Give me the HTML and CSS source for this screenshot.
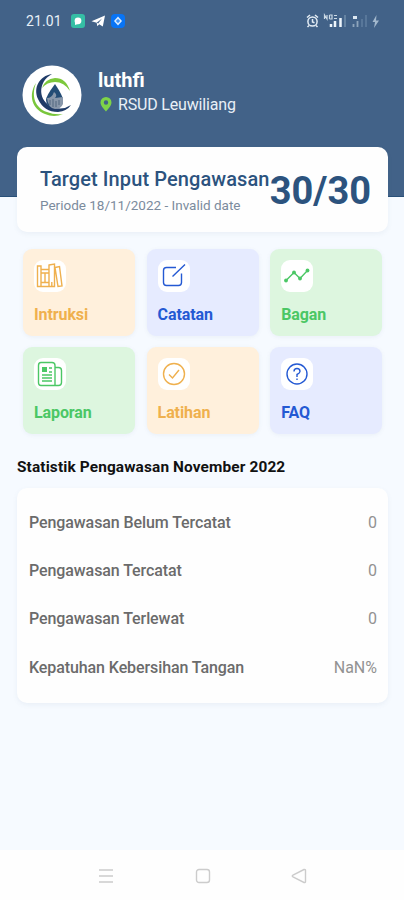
FILE: index.html
```html
<!DOCTYPE html>
<html lang="id">
<head>
<meta charset="utf-8">
<title>Pengawasan</title>
<link rel="stylesheet" href="styles.css">
</head>
<body>
<div class="app">
  <header class="header">
    <div class="status">
      <span class="time">21.01</span>
      <svg class="apps" width="54" height="14" viewBox="0 0 54 14">
        <rect width="14" height="14" rx="3" fill="#35bea5"/>
        <circle cx="7" cy="6.8" r="3.4" fill="#fff"/><path d="M4 7v4l3-1z" fill="#fff"/>
        <path d="M20.500 7.300 34 1.500 31.800 12.500 28.200 10.300 26.300 12.200 25.700 8.800z" fill="#fff"/>
        <path d="M25.700 8.800 31 4.500 27.200 9.600z" fill="#426288"/>
        <rect x="40" width="14" height="14" rx="4" fill="#0874f5"/>
        <path d="M47 2.500 51 7 47 11.500 43 7z" fill="#d9ecff"/><path d="M47 5v4M45 7h4" stroke="#0874f5" stroke-width="1"/>
      </svg>
      <svg class="signals" width="74" height="16" viewBox="0 0 74 16" fill="none">
        <g stroke="#e4edf5" stroke-width="1.500"><circle cx="6.500" cy="8.500" r="4.600"/><path d="M1 4.500 4 2M12 4.500 9 2M6.500 6v3l2 .8M3 12.500l-1.500 1.500M10 12.500l1.500 1.500"/></g>
        <path d="M18.500 6V2l2.500 4V2M23.500 2v4M23.500 2h2.500v4h-2.500M28 2.500h3M28 5.500h3" stroke="#cbd9e5" stroke-width="1.200"/>
        <path d="M25 14v-3M29 14V8M34.500 14V5" stroke="#eef5fb" stroke-width="2.500"/>
        <path d="M39 14V2" stroke="#6583a2" stroke-width="2"/>
        <path d="M47 3h4v3h-4z" fill="#dce7f1"/><path d="M47.500 14v-3M51.500 14V8" stroke="#8ea5bc" stroke-width="1.800"/>
        <path d="M56 14V6M60 14V2" stroke="#58779a" stroke-width="2"/>
        <path d="M70.500 2 66.500 9H69l-1 6 5-7.500H70z" fill="#a3b8cd"/>
      </svg>
    </div>
    <div class="profile">
      <svg class="avatar" width="60" height="60" viewBox="0 0 60 60" fill="none">
        <circle cx="30" cy="30" r="29.500" fill="#fff"/>
        <path d="M14 18C6 30 10 44 23 49q9 4 18 0-9 1-16-2C13 43 9 31 14 18z" fill="#79c63b"/>
        <path d="M30 9C17 11 11 23 16 34q6 13 20 13 9-1 13-7-9 6-18 2C16 37 15 17 30 9z" fill="#203c68"/>
        <path d="M20 23q3-9 13-10 11 0 15 13-6-9-15-9-8 0-13 6z" fill="#7cc83b"/>
        <path d="M33 19q-9 12-9 16a8.500 8.500 0 0 0 17 0q0-4-8-16z" fill="#234c75"/>
        <path d="M25 33q5 0 7-6 4 3 1 6l8-1v7q-2 5-8 5-7-1-8-11z" fill="#8897aa"/>
        <path d="M28 35v5M31 34v8M34 36v6M37 35v5" stroke="#50667f" stroke-width="1"/>
      </svg>
      <div class="identity">
        <div class="name">luthfi</div>
        <div class="place">
          <svg width="12" height="15" viewBox="0 0 12 15"><path fill-rule="evenodd" d="M6 0a5.500 5.500 0 0 1 5.500 5.500C11.500 9 6 14.500 6 14.500S.5 9 .5 5.500A5.500 5.500 0 0 1 6 0zm0 3.300a2.200 2.200 0 1 0 0 4.400 2.200 2.200 0 0 0 0-4.400z" fill="#7ed348"/></svg>
          <span class="hospital">RSUD Leuwiliang</span>
        </div>
      </div>
    </div>
  </header>

  <main class="content">
    <section class="target">
      <div>
        <div class="target-title">Target Input Pengawasan</div>
        <div class="period">Periode 18/11/2022 - Invalid date</div>
      </div>
      <div class="score">30/30</div>
    </section>

    <nav class="menu">
      <a class="tile orange"><span class="icon"><svg width="28" height="28" viewBox="0 0 28 28"><path d="M1.500 4H5v20.500H1.500zM5 7.500h8v17H5zM13 3l5.500-1v22.500H13zM19 5.500l4.500-1L26 24l-4 .5zM5 11h8M5 20.500h8M9 11v9.500M15.800 20v4"/></svg></span><span class="label">Intruksi</span></a>
      <a class="tile blue"><span class="icon"><svg width="28" height="28" viewBox="0 0 28 28"><path d="M16 5.500H6.500Q3.500 5.500 3.500 8.500v12q0 3 3 3h12q3 0 3-3v-9M12.500 14.500 25 2.500"/></svg></span><span class="label">Catatan</span></a>
      <a class="tile green"><span class="icon"><svg width="28" height="28" viewBox="0 0 28 28"><path d="M3 18.500 11 10.500l6 6 7.500-8"/><g class="dots"><circle cx="3" cy="18.500" r="1.900"/><circle cx="11" cy="10.500" r="1.900"/><circle cx="17" cy="16.500" r="1.900"/><circle cx="24.500" cy="8.500" r="1.900"/></g></svg></span><span class="label">Bagan</span></a>
      <a class="tile green"><span class="icon"><svg width="28" height="28" viewBox="0 0 28 28"><path d="M5 2.500h11q3 0 3 3v20H5q-2.500 0-2.500-3V5.500Q2.500 2.500 5 2.500zM19 7.500h3.500q3 0 3 3v12q0 3-3 3H17M13 8h3M13 12h3M6 15h10M6 18h10M6 21h10"/><rect class="dots" x="6" y="7" width="5" height="5"/></svg></span><span class="label">Laporan</span></a>
      <a class="tile orange"><span class="icon"><svg width="28" height="28" viewBox="0 0 28 28"><circle cx="14" cy="14" r="10.500"/><path d="m9 14.500 3.500 3.500 6.500-8"/></svg></span><span class="label">Latihan</span></a>
      <a class="tile blue"><span class="icon"><svg width="28" height="28" viewBox="0 0 28 28"><circle cx="14" cy="14" r="10"/><path d="M11 11.500Q11 8.500 14 8.500T17 11.500Q17 13 14 14.500V17M14 18.500V20"/></svg></span><span class="label">FAQ</span></a>
    </nav>

    <h2 class="stats-title">Statistik Pengawasan November 2022</h2>
    <section class="stats">
      <div class="row"><span class="key">Pengawasan Belum Tercatat</span><span class="value">0</span></div>
      <div class="row"><span class="key">Pengawasan Tercatat</span><span class="value">0</span></div>
      <div class="row"><span class="key">Pengawasan Terlewat</span><span class="value">0</span></div>
      <div class="row"><span class="key">Kepatuhan Kebersihan Tangan</span><span class="value">NaN%</span></div>
    </section>
  </main>

  <footer class="navbar">
    <svg width="16" height="16" viewBox="0 0 16 16"><path d="M1 2h14M1 8h14M1 14h14"/></svg>
    <svg width="16" height="16" viewBox="0 0 16 16"><rect x="1.500" y="1.500" width="13" height="13" rx="2.500"/></svg>
    <svg width="16" height="16" viewBox="0 0 16 16"><path d="M13 1.500 2 7q-1.500 1 0 2l11 5.500q1.500.3 1.500-1V2.500q0-1.300-1.500-1z"/></svg>
  </footer>
</div>
</body>
</html>
```
FILE: styles.css
```css
* { box-sizing: border-box; }
body { margin: 0; font-family: Roboto, sans-serif; background: #f6faff; }
.app { width: 404px; height: 900px; display: flex; flex-direction: column; overflow: hidden; }
.header { height: 197px; flex: none; background: #426288; border-bottom: 1px solid #285079; color: #fff; }
.status { height: 42px; display: flex; align-items: center; padding: 0 24px 0 26px; }
.time { font-size: 14px; letter-spacing: .1px; width: 45px; color: #e8f0f7; }
.signals { margin-left: auto; }
.profile { display: flex; padding: 23px 0 0 22px; }
.identity { padding: 2px 0 0 16px; }
.name { font-size: 20px; line-height: 27px; font-weight: 700; }
.place { display: flex; align-items: center; gap: 6px; height: 22px; margin-top: -1px; padding-left: 2px; }
.hospital { font-size: 16px; letter-spacing: -.17px; color: #e9f0f7; white-space: nowrap; }
.content { flex: 1; padding: 0 16px 0 17px; margin-top: -50px; }
.target { height: 85px; border-radius: 10px; background: #fefefe; box-shadow: 0 2px 5px #5a789412; display: flex; padding: 19px 17px 0 23px; justify-content: space-between; white-space: nowrap; color: #2c537e; }
.target-title { font-size: 20px; line-height: 26px; font-weight: 500; letter-spacing: .09px; }
.period { font-size: 13.5px; line-height: 26px; color: #7b8b9d; }
.score { font-size: 38px; line-height: 51px; font-weight: 700; margin-left: -4px; }
.menu { display: grid; grid-template-columns: repeat(3, 112px); grid-auto-rows: 87px; gap: 11px 11.6px; padding: 17px 0 0 6px; }
.tile { border-radius: 9px; padding: 11px; box-shadow: 0 1px 4px #5a789414; }
.icon { width: 32px; height: 32px; border-radius: 9px; background: #fff; display: grid; place-items: center; }
.icon svg { fill: none; stroke: currentColor; stroke-width: 1.4; }
.icon .dots { fill: currentColor; stroke: none; }
.label { display: block; margin-top: 12px; font-size: 16px; line-height: 21px; font-weight: 700; letter-spacing: -.1px; }
.orange { background: #fff0dc; color: #efb04e; }
.blue { background: #e6ebff; color: #2459d3; }
.green { background: #ddf6df; color: #4bc765; }
.stats-title { margin: 22px 0 0; height: 32px; font-size: 15.4px; line-height: 22px; font-weight: 700; letter-spacing: .13px; color: #111; white-space: nowrap; }
.stats { height: 215px; border-radius: 10px; background: #fefefe; box-shadow: 0 2px 5px #5a789414; padding: 10px 11px 0 12px; }
.row { height: 48.4px; display: flex; justify-content: space-between; align-items: center; font-size: 16px; }
.key { font-weight: 500; letter-spacing: -.09px; color: #6b6b6b; }
.value { color: #929292; }
.navbar { height: 50px; flex: none; background: #fefefe; display: flex; justify-content: space-between; align-items: center; padding: 2px 97px 0 98px; }
.navbar svg { fill: none; stroke: #ccc; stroke-width: 1.4; }
```
